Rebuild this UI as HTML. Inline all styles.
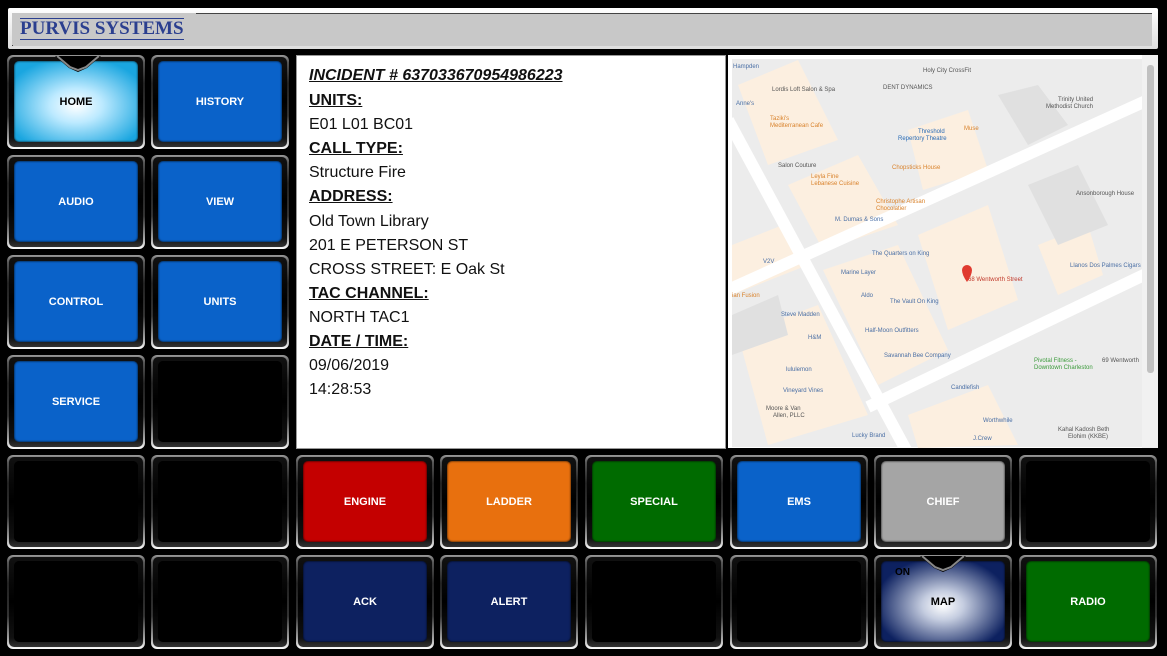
<!DOCTYPE html>
<html><head><meta charset="utf-8"><style>
*{margin:0;padding:0;box-sizing:border-box}
body{width:1167px;height:656px;background:#000;position:relative;overflow:hidden;font-family:"Liberation Sans",Arial,sans-serif}
.hdr{position:absolute;left:8px;top:8px;width:1150px;height:41px;background:linear-gradient(#fff,#ddd);border-radius:2px}
.hdr .in{position:absolute;left:4px;top:5px;right:6px;bottom:3px;background:#c8c8c8;border-top:1px solid #444;border-left:1px solid #444}
.logo{position:absolute;left:12px;top:13px;width:184px;height:32px;background:#c8c8c8}
.logo span{position:absolute;left:8px;top:5px;font-family:"Liberation Serif",serif;font-size:19px;font-weight:bold;color:#2b3f8f;white-space:nowrap;border-top:1.5px solid #2b3f8f;border-bottom:1.5px solid #2b3f8f;line-height:20px}
.b{position:absolute;width:138px;height:94px;border-radius:6px;background:linear-gradient(to bottom,#999 0,#555 8%,#222 30%,#333 65%,#aaa 90%,#fff 100%);padding:2px}
.b::before{content:"";position:absolute;left:2px;top:2px;right:2px;bottom:2px;border-radius:5px;background:linear-gradient(to bottom,#111,#000 50%,#111 90%,#333)}
.b .c{position:absolute;left:7px;top:6px;right:7px;bottom:7px;border-radius:5px;background:#000;display:flex;align-items:center;justify-content:center;color:#fff;font-weight:bold;font-size:11px;box-shadow:0 0 2px #000 inset}
.info{position:absolute;left:296px;top:55px;width:430px;height:394px;background:#fff;border:1px solid #999}
.info div{position:absolute;left:12px;font-size:16px;color:#111;line-height:20px}
.info .h{font-weight:bold;text-decoration:underline}
.map{position:absolute;left:728px;top:55px;width:430px;height:393px;background:#fff}
</style></head><body>
<div class="hdr"><div class="in"></div></div>
<div class="logo"><span>PURVIS SYSTEMS</span></div>

<div class="b" style="left:7px;top:55px"><div class="c" style="background:radial-gradient(ellipse 60% 60% at 50% 55%,#fff 0,#bdeaff 35%,#1aa6e0 100%);color:#000">HOME</div></div>
<div class="b" style="left:151px;top:55px"><div class="c" style="background:#0a62c9">HISTORY</div></div>
<div class="b" style="left:7px;top:155px"><div class="c" style="background:#0a62c9">AUDIO</div></div>
<div class="b" style="left:151px;top:155px"><div class="c" style="background:#0a62c9">VIEW</div></div>
<div class="b" style="left:7px;top:255px"><div class="c" style="background:#0a62c9">CONTROL</div></div>
<div class="b" style="left:151px;top:255px"><div class="c" style="background:#0a62c9">UNITS</div></div>
<div class="b" style="left:7px;top:355px"><div class="c" style="background:#0a62c9">SERVICE</div></div>
<div class="b" style="left:151px;top:355px"><div class="c"></div></div>

<div class="b" style="left:7px;top:455px"><div class="c"></div></div>
<div class="b" style="left:151px;top:455px"><div class="c"></div></div>
<div class="b" style="left:296px;top:455px"><div class="c" style="background:#c40000">ENGINE</div></div>
<div class="b" style="left:440px;top:455px"><div class="c" style="background:#e8700e">LADDER</div></div>
<div class="b" style="left:585px;top:455px"><div class="c" style="background:#006b00">SPECIAL</div></div>
<div class="b" style="left:730px;top:455px"><div class="c" style="background:#0a62c9">EMS</div></div>
<div class="b" style="left:874px;top:455px"><div class="c" style="background:#a5a5a5">CHIEF</div></div>
<div class="b" style="left:1019px;top:455px"><div class="c"></div></div>

<div class="b" style="left:7px;top:555px"><div class="c"></div></div>
<div class="b" style="left:151px;top:555px"><div class="c"></div></div>
<div class="b" style="left:296px;top:555px"><div class="c" style="background:#0d2160">ACK</div></div>
<div class="b" style="left:440px;top:555px"><div class="c" style="background:#0d2160">ALERT</div></div>
<div class="b" style="left:585px;top:555px"><div class="c"></div></div>
<div class="b" style="left:730px;top:555px"><div class="c"></div></div>
<div class="b" style="left:874px;top:555px"><div class="c" style="background:radial-gradient(ellipse 55% 60% at 50% 55%,#fff 0,#c5cde0 30%,#0d2160 100%);color:#000">MAP<span style="position:absolute;left:14px;top:6px;font-size:10px">ON</span></div></div>
<div class="b" style="left:1019px;top:555px"><div class="c" style="background:#006b00">RADIO</div></div>

<svg style="position:absolute;left:55px;top:56px" width="46" height="20"><polygon points="0,0 46,0 32,12 23,16 14,12" fill="#000"/><polyline points="2,0 15,11 23,14 31,11 44,0" fill="none" stroke="#888" stroke-width="2"/></svg>
<svg style="position:absolute;left:920px;top:556px" width="46" height="20"><polygon points="0,0 46,0 32,12 23,16 14,12" fill="#000"/><polyline points="2,0 15,11 23,14 31,11 44,0" fill="none" stroke="#888" stroke-width="2"/></svg>

<div class="info">
<div class="h" style="top:10px;font-style:italic">INCIDENT # 637033670954986223</div>
<div class="h" style="top:35px">UNITS:</div>
<div style="top:59px">E01 L01 BC01</div>
<div class="h" style="top:83px">CALL TYPE:</div>
<div style="top:107px">Structure Fire</div>
<div class="h" style="top:131px">ADDRESS:</div>
<div style="top:156px">Old Town Library</div>
<div style="top:180px">201 E PETERSON ST</div>
<div style="top:204px">CROSS STREET: E Oak St</div>
<div class="h" style="top:228px">TAC CHANNEL:</div>
<div style="top:252px">NORTH TAC1</div>
<div class="h" style="top:276px">DATE / TIME:</div>
<div style="top:300px">09/06/2019</div>
<div style="top:324px">14:28:53</div>
</div>

<div class="map">
<svg width="430" height="393" style="position:absolute;left:0;top:0" font-family="Liberation Sans,sans-serif" font-size="6">
<rect x="4" y="4" width="410" height="388" fill="#ececec"/>
<g fill="#fcefe0">
<polygon points="10,30 70,5 110,85 40,110"/>
<polygon points="60,130 130,100 170,170 95,195"/>
<polygon points="180,75 240,55 260,115 195,135"/>
<polygon points="95,215 170,190 220,295 150,330"/>
<polygon points="190,180 260,150 290,245 220,275"/>
<polygon points="4,190 55,170 80,210 4,240"/>
<polygon points="10,280 90,250 140,360 40,390"/>
<polygon points="310,190 360,170 375,220 330,240"/>
<polygon points="180,360 260,330 290,390 190,393"/>
</g>
<g fill="#e0e0e0"><polygon points="270,40 310,30 340,70 300,90"/><polygon points="300,130 350,110 380,170 330,190"/><polygon points="4,260 50,240 60,280 4,300"/></g>
<g stroke="#fff" stroke-width="12" fill="none">
<line x1="0" y1="65" x2="178" y2="395"/>
<line x1="0" y1="235" x2="420" y2="45"/>
<line x1="140" y1="352" x2="420" y2="218"/>
</g>
<g fill="#555">
<text x="5" y="13" fill="#4a6fa5">Hampden</text><text x="195" y="17">Holy City CrossFit</text><text x="155" y="34">DENT DYNAMICS</text>
<text x="44" y="36">Lordis Loft Salon &amp; Spa</text><text x="8" y="50" fill="#4a6fa5">Anne's</text>
<text x="42" y="65" fill="#d9822b">Taziki's</text><text x="42" y="72" fill="#d9822b">Mediterranean Cafe</text>
<text x="190" y="78" fill="#2a6bb5">Threshold</text><text x="170" y="85" fill="#2a6bb5">Repertory Theatre</text><text x="236" y="75" fill="#d9822b">Muse</text>
<text x="330" y="46">Trinity United</text><text x="318" y="53">Methodist Church</text>
<text x="50" y="112">Salon Couture</text><text x="164" y="114" fill="#d9822b">Chopsticks House</text>
<text x="83" y="123" fill="#d9822b">Leyla Fine</text><text x="83" y="130" fill="#d9822b">Lebanese Cuisine</text>
<text x="148" y="148" fill="#d9822b">Christophe Artisan</text><text x="148" y="155" fill="#d9822b">Chocolatier</text>
<text x="107" y="166" fill="#4a6fa5">M. Dumas &amp; Sons</text><text x="348" y="140">Ansonborough House</text>
<text x="144" y="200" fill="#4a6fa5">The Quarters on King</text><text x="35" y="208" fill="#4a6fa5">V2V</text>
<text x="113" y="219" fill="#4a6fa5">Marine Layer</text><text x="342" y="212" fill="#4a6fa5">Llanos Dos Palmes Cigars</text>
<text x="240" y="226" fill="#c0392b">68 Wentworth Street</text><text x="4" y="242" fill="#d9822b">ian Fusion</text>
<text x="133" y="242" fill="#4a6fa5">Aldo</text><text x="162" y="248" fill="#4a6fa5">The Vault On King</text>
<text x="53" y="261" fill="#4a6fa5">Steve Madden</text><text x="137" y="277" fill="#4a6fa5">Half-Moon Outfitters</text>
<text x="80" y="284" fill="#4a6fa5">H&amp;M</text><text x="156" y="302" fill="#4a6fa5">Savannah Bee Company</text>
<text x="306" y="307" fill="#3a9a3a">Pivotal Fitness -</text><text x="306" y="314" fill="#3a9a3a">Downtown Charleston</text><text x="374" y="307">69 Wentworth</text>
<text x="58" y="316" fill="#4a6fa5">lululemon</text><text x="55" y="337" fill="#4a6fa5">Vineyard Vines</text>
<text x="223" y="334" fill="#4a6fa5">Candlefish</text><text x="38" y="355">Moore &amp; Van</text><text x="45" y="362">Allen, PLLC</text>
<text x="255" y="367" fill="#4a6fa5">Worthwhile</text><text x="330" y="376">Kahal Kadosh Beth</text><text x="340" y="383">Elohim (KKBE)</text>
<text x="124" y="382" fill="#4a6fa5">Lucky Brand</text><text x="245" y="385" fill="#4a6fa5">J.Crew</text>
</g>
<path d="M234,215 a5,5 0 1 1 10,0 q0,5 -5,12 q-5,-7 -5,-12z" fill="#e03a2f"/>
<rect x="414" y="0" width="16" height="393" fill="#f1f1f1"/><rect x="419" y="10" width="7" height="308" rx="3" fill="#c1c1c1"/>
</svg>
</div>
</body></html>
